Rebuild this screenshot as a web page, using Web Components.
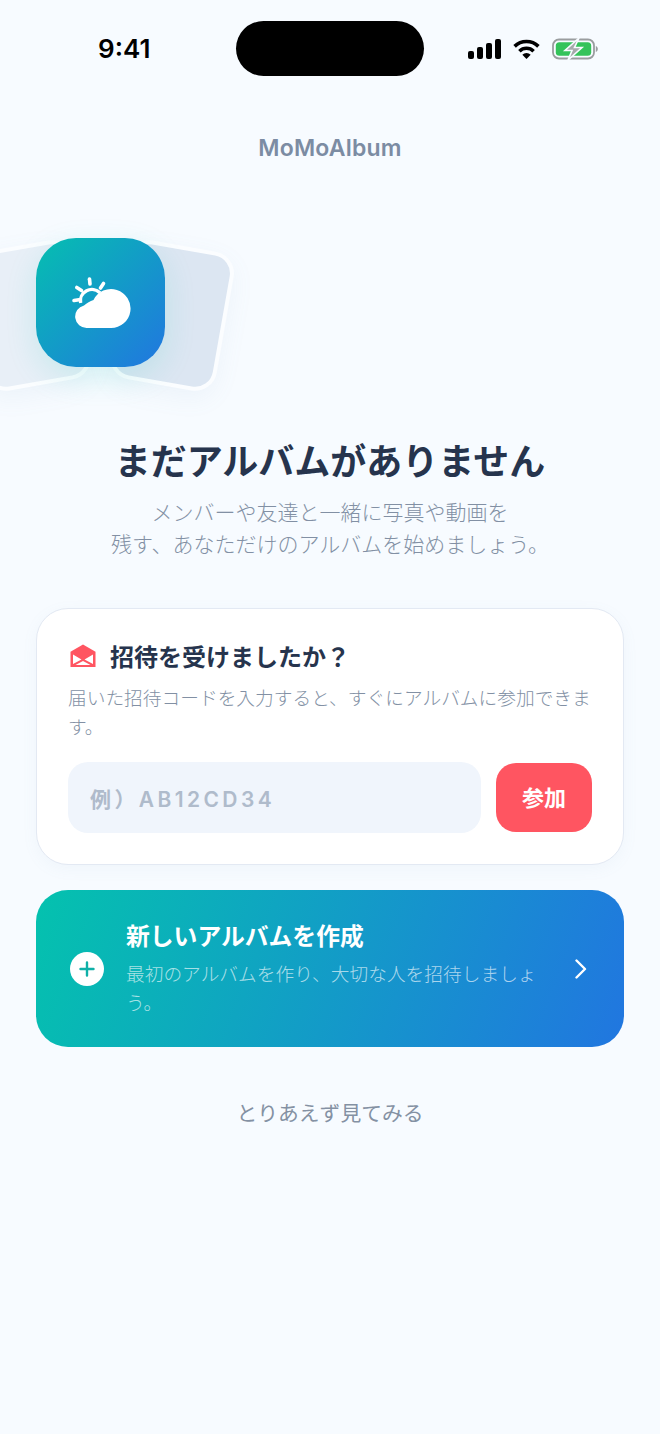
<!DOCTYPE html>
<html lang="ja">
<head>
<meta charset="utf-8">
<title>MoMoAlbum</title>
<style>
    html, body { margin: 0; padding: 0; background: #f7fbff; }
    body { font-family: Inter, "Noto Sans CJK JP", sans-serif; }
</style>
</head>
<body>
<empty-screen>
    <status-bar time="9:41"></status-bar>
    <app-title>MoMoAlbum</app-title>
    <hero-art></hero-art>
    <empty-message>
        <span slot="title">まだアルバムがありません</span>
        メンバーや友達と一緒に写真や動画を<br>残す、あなただけのアルバムを始めましょう。
    </empty-message>
    <invite-card>
        <span slot="title">招待を受けましたか？</span>
        <span slot="desc">届いた招待コードを入力すると、すぐにアルバムに参加できます。</span>
        <span slot="placeholder">例）AB12CD34</span>
        <span slot="action">参加</span>
    </invite-card>
    <create-card>
        <span slot="title">新しいアルバムを作成</span>
        最初のアルバムを作り、大切な人を招待しましょう。
    </create-card>
    <skip-link>とりあえず見てみる</skip-link>
</empty-screen>

<script>
class EmptyScreen extends HTMLElement {
    constructor() {
        super();
        this.attachShadow({ mode: "open" });
        this.shadowRoot.innerHTML = `
            <style>
                :host {
                    display: flex;
                    flex-direction: column;
                    width: 660px;
                    height: 1434px;
                    overflow: hidden;
                    background: #f7fbff;
                    font-family: Inter, "Noto Sans CJK JP", sans-serif;
                }
            </style>
            <slot></slot>
        `;
    }
}

class StatusBar extends HTMLElement {
    constructor() {
        super();
        this.attachShadow({ mode: "open" });
        this.shadowRoot.innerHTML = `
            <style>
                :host {
                    display: flex;
                    align-items: center;
                    height: 55px;
                    margin-top: 21px;
                    padding: 0 62px 0 98px;
                }
                .time {
                    width: 138px;
                    margin-top: 1px;
                    font: 600 26px/1 Inter, sans-serif;
                    color: #000;
                }
                .island {
                    width: 188px;
                    height: 55px;
                    border-radius: 28px;
                    background: #000;
                }
                .icons {
                    display: flex;
                    align-items: center;
                    gap: 12px;
                    margin-left: auto;
                }
                svg { display: block; }
            </style>
            <span class="time">${this.getAttribute("time")}</span>
            <div class="island"></div>
            <div class="icons">
                <svg width="33" height="20" viewBox="0 0 33 20" fill="#000">
                    <rect x="0" y="12" width="6" height="8" rx="2"/>
                    <rect x="9" y="8" width="6" height="12" rx="2"/>
                    <rect x="18" y="4" width="6" height="16" rx="2"/>
                    <rect x="27" y="0" width="6" height="20" rx="2"/>
                </svg>
                <svg width="27" height="20" viewBox="0 0 27 20" fill="none" stroke="#000" stroke-width="3.600">
                    <path d="M1.600 7.400a17 17 0 0 1 23.800 0"/>
                    <path d="M6.400 12.200a10.200 10.200 0 0 1 14.200 0"/>
                    <path d="M13.500 20l-4.200-4.200a6 6 0 0 1 8.400 0z" fill="#000" stroke="none"/>
                </svg>
                <svg width="46" height="22" viewBox="0 0 46 22" fill="none">
                    <rect x="1" y="1.500" width="41" height="19" rx="6" stroke="#9a9d9f" stroke-width="1.800"/>
                    <rect x="3.800" y="4.200" width="35.400" height="13.600" rx="3.600" fill="#34c35a"/>
                    <path d="M43.800 8c1.400.5 2 1.700 2 3s-.6 2.500-2 3z" fill="#9a9d9f"/>
                    <path d="M27 0L13 12.500h7L16 22l14-12.500h-7.500z" fill="#a6a9ab" stroke="#f7fbff" stroke-width="1.600"/>
                </svg>
            </div>
        `;
    }
}

class AppTitle extends HTMLElement {
    constructor() {
        super();
        this.attachShadow({ mode: "open" });
        this.shadowRoot.innerHTML = `
            <style>
                :host {
                    display: block;
                    margin-top: 57px;
                    text-align: center;
                    font: 600 23px/30px Inter, sans-serif;
                    letter-spacing: 0.2px;
                    color: #7c8ca3;
                }
            </style>
            <slot></slot>
        `;
    }
}

class HeroArt extends HTMLElement {
    constructor() {
        super();
        this.attachShadow({ mode: "open" });
        this.shadowRoot.innerHTML = `
            <style>
                :host {
                    display: block;
                    position: relative;
                    height: 129px;
                    margin: 75px 0 0 36px;
                }
                .photo {
                    position: absolute;
                    top: 7px;
                    width: 108px;
                    height: 141px;
                    box-sizing: border-box;
                    border: 4px solid #fbfdff;
                    border-radius: 22px;
                    box-shadow: 0 8px 24px rgba(120, 150, 190, 0.08);
                }
                .left {
                    left: -61px;
                    background: #e8eff7;
                    transform: rotate(-10deg);
                }
                .right {
                    left: 82px;
                    background: #dce6f2;
                    transform: rotate(10deg);
                }
                .tile {
                    position: absolute;
                    left: 0;
                    top: 0;
                    display: flex;
                    align-items: center;
                    justify-content: center;
                    width: 129px;
                    height: 129px;
                    border-radius: 40px;
                    background: linear-gradient(135deg, #05bfb0, #2176e0);
                    box-shadow: 0 10px 32px rgba(0, 196, 176, 0.14);
                }
                svg { display: block; }
            </style>
            <div class="photo left"></div>
            <div class="photo right"></div>
            <div class="tile">
                <svg width="62" height="56" viewBox="70 274 62 56">
                    <g fill="none" stroke="#fff" stroke-linecap="round">
                        <g stroke-width="3.600">
                            <path d="M89.500 278l.5 5"/>
                            <path d="M103.500 282.500l-3 4.500"/>
                            <path d="M76.800 286.500l4.700 3"/>
                            <path d="M74 299.500l5-.8"/>
                        </g>
                        <path stroke-width="3.400" stroke-linecap="butt" d="M80.600 302A11.500 11.500 0 0 1 100 291.800"/>
                    </g>
                    <path fill="#fff" d="M87 327H111A19.500 19.500 0 1 0 93.500 299C90 300 87 302 84 304.500A11.400 11.400 0 0 0 87 327Z"/>
                </svg>
            </div>
        `;
    }
}

class EmptyMessage extends HTMLElement {
    constructor() {
        super();
        this.attachShadow({ mode: "open" });
        this.shadowRoot.innerHTML = `
            <style>
                :host {
                    display: block;
                    margin-top: 71px;
                    text-align: center;
                    font-size: 21px;
                    font-weight: 300;
                    line-height: 32px;
                    color: #8290a4;
                }
                h1 {
                    margin: 0 0 11px;
                    font-size: 36px;
                    line-height: 48px;
                    font-weight: 700;
                    color: #26344d;
                }
            </style>
            <h1><slot name="title"></slot></h1>
            <slot></slot>
        `;
    }
}

class InviteCard extends HTMLElement {
    constructor() {
        super();
        this.attachShadow({ mode: "open" });
        this.shadowRoot.innerHTML = `
            <style>
                :host {
                    display: block;
                    box-sizing: border-box;
                    height: 257px;
                    margin: 47px 36px 0;
                    padding: 28px 31px 0;
                    background: #fff;
                    border: 1px solid #e3e9f3;
                    border-radius: 32px;
                    box-shadow: 0 4px 16px rgba(120, 150, 190, 0.06);
                }
                .head {
                    display: flex;
                    align-items: center;
                    gap: 14px;
                    height: 36px;
                    font-size: 24px;
                    font-weight: 700;
                    color: #26344d;
                }
                svg { display: block; margin-left: 2px; }
                .desc {
                    margin-top: 11px;
                    font-size: 18.720px;
                    font-weight: 300;
                    line-height: 29px;
                    color: #8290a4;
                }
                .row {
                    display: flex;
                    align-items: center;
                    gap: 15px;
                    margin-top: 20px;
                }
                .field {
                    display: flex;
                    align-items: center;
                    flex: 1;
                    height: 71px;
                    padding-left: 22px;
                    border-radius: 20px;
                    background: #f0f5fc;
                    font-size: 21px;
                    font-weight: 600;
                    letter-spacing: 3.400px;
                    color: #afbbcb;
                }
                .join {
                    display: flex;
                    align-items: center;
                    justify-content: center;
                    box-sizing: border-box;
                    width: 96px;
                    height: 69px;
                    padding-bottom: 3px;
                    border-radius: 20px;
                    background: #ff5561;
                    font-size: 22px;
                    font-weight: 700;
                    color: #fff;
                }
            </style>
            <div class="head">
                <svg width="26" height="23" viewBox="0 0 26 24" preserveAspectRatio="none">
                    <path fill="#ff5561" d="M13 0.500L25.500 8v16H0.500V8z"/>
                    <path fill="#fff" d="M3 11L11.500 16.300 3 20.800zM23 11V20.800L14.500 16.300zM5.500 22L13 17.800 20.500 22z"/>
                </svg>
                <slot name="title"></slot>
            </div>
            <div class="desc"><slot name="desc"></slot></div>
            <div class="row">
                <div class="field"><slot name="placeholder"></slot></div>
                <div class="join"><slot name="action"></slot></div>
            </div>
        `;
    }
}

class CreateCard extends HTMLElement {
    constructor() {
        super();
        this.attachShadow({ mode: "open" });
        this.shadowRoot.innerHTML = `
            <style>
                :host {
                    display: flex;
                    align-items: center;
                    box-sizing: border-box;
                    height: 157px;
                    margin: 25px 36px 0;
                    padding: 0 36px 0 34px;
                    border-radius: 32px;
                    background: linear-gradient(110deg, #04c2ae, #2176e0);
                    color: #fff;
                }
                .plus {
                    flex: none;
                    display: flex;
                    align-items: center;
                    justify-content: center;
                    width: 34px;
                    height: 34px;
                    border-radius: 50%;
                    background: #fff;
                }
                .text {
                    flex: 1;
                    min-width: 0;
                    margin: 0 33px 0 22px;
                }
                .title {
                    margin-bottom: 5px;
                    font-size: 23.800px;
                    font-weight: 700;
                    line-height: 36px;
                }
                .sub {
                    font-size: 18.720px;
                    font-weight: 300;
                    line-height: 29px;
                    color: rgba(255, 255, 255, 0.65);
                }
                svg { display: block; flex: none; }
            </style>
            <div class="plus">
                <svg width="18" height="18" viewBox="0 0 18 18" fill="none" stroke="#0fb0a8" stroke-width="2.400" stroke-linecap="round">
                    <path d="M9 2.500v13M2.500 9h13"/>
                </svg>
            </div>
            <div class="text">
                <div class="title"><slot name="title"></slot></div>
                <div class="sub"><slot></slot></div>
            </div>
            <svg width="14" height="20" viewBox="0 0 14 20" fill="none" stroke="#fff" stroke-width="2.400" stroke-linecap="round" stroke-linejoin="round">
                <path d="M2.500 1.500l8.500 8.500-8.500 8.500"/>
            </svg>
        `;
    }
}

class SkipLink extends HTMLElement {
    constructor() {
        super();
        this.attachShadow({ mode: "open" });
        this.shadowRoot.innerHTML = `
            <style>
                :host {
                    display: block;
                    margin-top: 51px;
                    text-align: center;
                    font-size: 20.800px;
                    line-height: 32px;
                    color: #8491a3;
                }
            </style>
            <slot></slot>
        `;
    }
}

customElements.define("empty-screen", EmptyScreen);
customElements.define("status-bar", StatusBar);
customElements.define("app-title", AppTitle);
customElements.define("hero-art", HeroArt);
customElements.define("empty-message", EmptyMessage);
customElements.define("invite-card", InviteCard);
customElements.define("create-card", CreateCard);
customElements.define("skip-link", SkipLink);
</script>
</body>
</html>
